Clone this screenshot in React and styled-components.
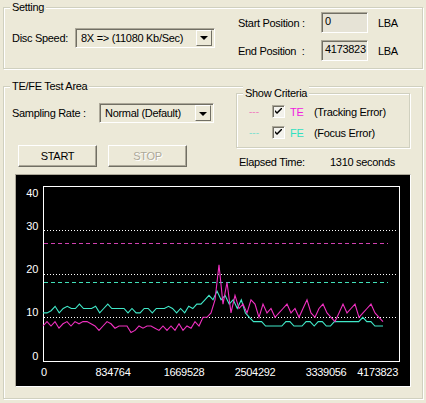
import React from "react"
import styled, { createGlobalStyle } from "styled-components"

const GlobalStyle = createGlobalStyle`
  html, body {
    margin: 0;
    padding: 0;
    background: #ECE9D8;
  }
  body {
    font-family: "Liberation Sans", Arial, sans-serif;
    font-size: 11px;
    color: #000;
  }
`

const Dialog = styled.div`
  width: 426px;
  height: 403px;
  box-sizing: border-box;
  padding: 0 3px;
  background: #ECE9D8;
  letter-spacing: -0.3px;
  overflow: hidden;
`

const Group = styled.fieldset`
  margin: ${p => p.$margin || "0"};
  padding: 0;
  min-width: 0;
  border: 1px solid #D0D0BF;
  box-shadow: inset 1px 1px #fff, 1px 1px #fff;
`

const Legend = styled.legend`
  margin-left: 6px;
  padding: 0 2px;
  line-height: 14px;
  background: #ECE9D8;
`

const SettingBody = styled.div`
  display: flex;
  align-items: center;
  margin-top: -2px;
  padding: 0 0 7px 8px;
`

const Field = styled.div`
  display: flex;
  align-items: center;
  gap: ${p => p.$gap ?? 7}px;
  margin-top: 2px;
`

const Label = styled.span`
  white-space: nowrap;
  width: ${p => (p.$w ? `${p.$w}px` : "auto")};
  color: ${p => p.$color || "inherit"};
`

const Combo = styled.div`
  display: flex;
  align-items: center;
  box-sizing: border-box;
  width: ${p => p.$w}px;
  height: 20px;
  padding: 2px;
  background: #ECE9D8;
  border: 1px solid;
  border-color: #ACA899 #fff #fff #ACA899;
  box-shadow: inset 1px 1px #716F64;
  span {
    flex: 1;
    padding-left: 3px;
    white-space: nowrap;
  }
`

const DropButton = styled.div`
  width: 16px;
  height: 16px;
  box-sizing: border-box;
  background: #ECE9D8;
  border: 1px solid;
  border-color: #fff #716F64 #716F64 #fff;
  display: flex;
  align-items: center;
  justify-content: center;
  &::after {
    content: "";
    border-left: 4px solid transparent;
    border-right: 4px solid transparent;
    border-top: 4px solid #000;
    margin-top: 1px;
  }
`

const PositionGrid = styled.div`
  display: grid;
  grid-template-columns: 83px 57px auto;
  grid-auto-rows: 21px;
  row-gap: 7px;
  align-items: center;
  margin-left: 23px;
`

const ReadOnly = styled.div`
  box-sizing: border-box;
  height: 21px;
  margin-right: 10px;
  padding: 2px 0 0 3px;
  background: #E6E3D6;
  border: 1px solid;
  border-color: #ACA899 #fff #fff #ACA899;
  box-shadow: inset 1px 1px #716F64;
  line-height: 13px;
`

const TopArea = styled.div`
  display: flex;
  align-items: flex-start;
  padding: 0 12px 0 8px;
`

const LeftCol = styled.div`
  display: flex;
  flex-direction: column;
  padding-top: 8px;
`

const ButtonRow = styled.div`
  display: flex;
  gap: 11px;
  margin: 22px 0 0 6px;
`

const Button = styled.button`
  width: 79px;
  height: 22px;
  padding: 0;
  font: inherit;
  letter-spacing: inherit;
  background: #ECE9D8;
  border: 1px solid;
  border-color: #fff #716F64 #716F64 #fff;
  box-shadow: inset -1px -1px #ACA899;
  color: ${p => (p.disabled ? "#ACA899" : "#000")};
  text-shadow: ${p => (p.disabled ? "1px 1px #fff" : "none")};
`

const RightCol = styled.div`
  display: flex;
  flex-direction: column;
  width: 174px;
  margin-left: auto;
`

const CriteriaRows = styled.div`
  display: flex;
  flex-direction: column;
  padding: 1px 0 4px 12px;
`

const CriteriaRow = styled.div`
  display: flex;
  align-items: center;
  height: 21px;
`

const Dashes = styled.span`
  width: 23px;
  color: ${p => p.$color};
  font-size: 10px;
  letter-spacing: 0;
`

const Check = styled.span`
  box-sizing: border-box;
  width: 13px;
  height: 13px;
  margin-right: 5px;
  background: #F3F2EC;
  border: 1px solid;
  border-color: #ACA899 #fff #fff #ACA899;
  box-shadow: inset 1px 1px #716F64;
  display: flex;
  align-items: center;
  justify-content: center;
  svg {
    display: block;
  }
`

const Elapsed = styled.div`
  display: flex;
  margin: 7px 0 0 3px;
  line-height: 14px;
`

const ChartPanel = styled.div`
  width: 394px;
  height: 211px;
  margin: 5px 0 11px 11px;
  background: #000;
  border: 1px solid;
  border-color: #ACA899 #fff #fff #ACA899;
  svg {
    display: block;
  }
`

const TE = [8, 9, 8, 9, 7.5, 8.5, 9, 8, 9, 8.5, 9, 9, 8.5, 8, 7, 8, 9, 8.5, 7.5, 8, 8, 8, 6.5, 7, 8, 7.5, 8, 8, 7.5, 7, 8, 7, 8, 7, 8.5, 7, 8, 7.5, 9, 8, 10, 10, 11, 14, 22, 13, 18, 11, 15, 12, 13, 11, 14, 13, 10, 13, 11, 12, 10, 11, 12, 13, 11, 12, 10, 12, 14, 11, 10, 12, 13, 11, 10, 9, 11, 13, 11, 12, 13, 10, 11, 12, 13, 11, 10, 9]
const FE = [11, 11, 11.5, 12.5, 11, 12, 12.5, 12, 12, 13, 12, 12, 12, 12.5, 11, 12, 13, 12, 12, 12, 12, 11, 12, 11, 11, 12, 12, 11, 12, 12, 12, 12.5, 12, 11, 12, 11, 12.5, 12, 13, 13, 14, 15, 14, 16, 14, 15, 13, 14, 12, 14, 11, 10, 9, 9, 9, 8, 8, 8, 8, 8, 9, 9, 8, 8, 8, 9, 9, 8, 9, 9, 8, 8, 9, 9, 9, 9, 9, 9, 9, 10, 9, 9, 8, 8, 8]

const toY = v => 362 - v * 4.375

const toPoints = data =>
  data.map((v, i) => `${(43 + (i * 340) / (data.length - 1)).toFixed(1)},${toY(v).toFixed(1)}`).join(" ")

const yLabels = [
  { t: "40", y: 198 },
  { t: "30", y: 231 },
  { t: "20", y: 274 },
  { t: "10", y: 317 },
  { t: "0", y: 361 },
]

const xLabels = [
  { t: "0", x: 44, a: "middle" },
  { t: "834764", x: 113, a: "middle" },
  { t: "1669528", x: 184, a: "middle" },
  { t: "2504292", x: 255, a: "middle" },
  { t: "3339056", x: 326, a: "middle" },
  { t: "4173823", x: 398, a: "end" },
]

const Chart = () => (
  <svg width="394" height="211" viewBox="16 176 394 211" fontFamily="Liberation Sans, Arial, sans-serif" fontSize="11" letterSpacing="-0.3">
    <rect x="43.5" y="187.5" width="356" height="175" fill="none" stroke="#fff" />
    {[30, 20, 10].map(v => (
      <line key={v} x1="44" x2="397" y1={Math.round(toY(v)) + 0.5} y2={Math.round(toY(v)) + 0.5} stroke="#fff" strokeDasharray="1 2" />
    ))}
    <line x1="44" x2="388" y1="244.5" y2="244.5" stroke="#D040B0" strokeDasharray="4 3" />
    <line x1="44" x2="388" y1="283.5" y2="283.5" stroke="#40E0B8" strokeDasharray="4 3" />
    <polyline points={toPoints(FE)} fill="none" stroke="#40E8C8" strokeWidth="1.1" />
    <polyline points={toPoints(TE)} fill="none" stroke="#F030C0" strokeWidth="1.1" />
    {yLabels.map(l => (
      <text key={l.t} x="38" y={l.y} fill="#fff" textAnchor="end">{l.t}</text>
    ))}
    {xLabels.map(l => (
      <text key={l.t} x={l.x} y="377" fill="#fff" textAnchor={l.a}>{l.t}</text>
    ))}
  </svg>
)

const CheckMark = () => (
  <svg width="7" height="7" viewBox="0 0 7 7">
    <path d="M0 2 L0 4 L2 6 L7 1 L7 -1 L2 4 Z" fill="#000" />
  </svg>
)

export default function App() {
  return (
    <Dialog>
      <GlobalStyle />
      <Group>
        <Legend>Setting</Legend>
        <SettingBody>
          <Field>
            <Label>Disc Speed:</Label>
            <Combo $w={140}>
              <span>8X =&gt; (11080 Kb/Sec)</span>
              <DropButton />
            </Combo>
          </Field>
          <PositionGrid>
            <Label>Start Position :</Label>
            <ReadOnly>0</ReadOnly>
            <Label>LBA</Label>
            <Label>End Position&nbsp; :</Label>
            <ReadOnly>4173823</ReadOnly>
            <Label>LBA</Label>
          </PositionGrid>
        </SettingBody>
      </Group>

      <Group $margin="10px 0 0 0">
        <Legend>TE/FE Test Area</Legend>
        <TopArea>
          <LeftCol>
            <Field $gap={0}>
              <Label $w={87}>Sampling Rate :</Label>
              <Combo $w={115}>
                <span>Normal (Default)</span>
                <DropButton />
              </Combo>
            </Field>
            <ButtonRow>
              <Button>START</Button>
              <Button disabled>STOP</Button>
            </ButtonRow>
          </LeftCol>
          <RightCol>
            <Group $margin="-7px 0 0 0">
              <Legend>Show Criteria</Legend>
              <CriteriaRows>
                <CriteriaRow>
                  <Dashes $color="#F080C0">---</Dashes>
                  <Check><CheckMark /></Check>
                  <Label $w={24} $color="#F020E0">TE</Label>
                  <Label>(Tracking Error)</Label>
                </CriteriaRow>
                <CriteriaRow>
                  <Dashes $color="#80E0D0">---</Dashes>
                  <Check><CheckMark /></Check>
                  <Label $w={24} $color="#30E0C0">FE</Label>
                  <Label>(Focus Error)</Label>
                </CriteriaRow>
              </CriteriaRows>
            </Group>
            <Elapsed>
              <Label $w={91}>Elapsed Time:</Label>
              <Label>1310 seconds</Label>
            </Elapsed>
          </RightCol>
        </TopArea>
        <ChartPanel>
          <Chart />
        </ChartPanel>
      </Group>
    </Dialog>
  )
}
